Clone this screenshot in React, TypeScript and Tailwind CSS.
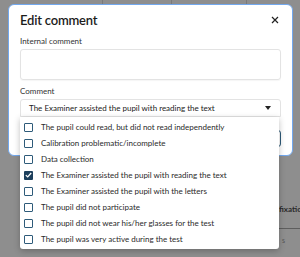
import { useState } from "react"

const options = [
  "The pupil could read, but did not read independently",
  "Calibration problematic/incomplete",
  "Data collection",
  "The Examiner assisted the pupil with reading the text",
  "The Examiner assisted the pupil with the letters",
  "The pupil did not participate",
  "The pupil did not wear his/her glasses for the test",
  "The pupil was very active during the test",
]

const stats = [
  { label: "Lo", value: "35" },
  { label: "Or", value: "96" },
  { label: "Sa", value: "4." },
  { label: "YI", value: "3." },
  { label: "Re", value: "8:" },
]

function Checkbox({ checked }: { checked: boolean }) {
  if (checked) {
    return (
      <span className="flex h-[9px] w-[9px] shrink-0 items-center justify-center rounded-[1px] bg-[#1d3f5c]">
        <svg width="7" height="6" viewBox="0 0 7 6" fill="none">
          <path d="M0.8 3.1 L2.7 4.9 L6.2 1" stroke="white" strokeWidth="1.3" />
        </svg>
      </span>
    )
  }
  return <span className="h-[9px] w-[9px] shrink-0 rounded-[1px] border-[1.5px] border-[#2e5b7a] bg-white" />
}

export default function App() {
  const [selected] = useState(3)

  return (
    <div
      className="relative h-[257px] w-[300px] overflow-hidden bg-[#8e8e8e]"
      style={{ fontFamily: "Lato, 'Open Sans', sans-serif" }}
    >
      {/* page behind the overlay */}
      <div className="flex h-full flex-col">
        <div className="flex h-[4px] shrink-0">
          <div className="w-[103px] border-r border-[#7a7a7a]" />
          <div className="w-[69px] border-r border-[#7a7a7a]" />
          <div className="w-[75px] border-r border-[#7a7a7a]" />
        </div>
        <div className="flex flex-1">
          <div className="flex flex-1 flex-col justify-end pb-[6px] pl-[279px]">
            <div className="text-[8px] font-bold leading-[10px] text-[#2a2a2a]">fixation</div>
            <div className="mt-[14px] border-t border-[#5e5e5e]" />
            <div className="mt-[6px] pl-[3px] text-[7px] text-[#555]">s</div>
            <div className="h-[6px]" />
          </div>
          <div className="flex w-[7px] shrink-0 flex-col gap-[13px] pt-[16px] text-[8px] leading-[11px]">
            {stats.map((s) => (
              <div key={s.label} className="flex flex-col">
                <span className="text-[#4a4a4a]">{s.label}</span>
                <span className="text-[#222]">{s.value}</span>
              </div>
            ))}
          </div>
        </div>
      </div>

      {/* modal */}
      <div className="absolute left-[8px] top-[4px] flex h-[152px] w-[285px] flex-col rounded-[6px] border border-[#72a8ee] bg-white px-[11px]">
        <div className="flex items-center justify-between pt-[5px]">
          <h2 className="text-[13px] font-semibold leading-[20px] tracking-[-0.2px] text-[#1c1c1c]">Edit comment</h2>
          <svg width="8" height="8" viewBox="0 0 8 8" className="mr-[2px]">
            <path d="M1 1 L7 7 M7 1 L1 7" stroke="#222" strokeWidth="1.2" />
          </svg>
        </div>
        <label className="mt-[6px] text-[8px] leading-[10px] text-[#333]">Internal comment</label>
        <div className="mt-[3px] h-[31px] rounded-[3px] border border-[#e3e3e3] shadow-[0_1px_1px_rgba(0,0,0,0.04)]" />
        <label className="mt-[6px] text-[8px] leading-[10px] text-[#333]">Comment</label>
        <div className="mt-[3px] flex h-[18px] items-center justify-between rounded-t-[3px] border border-[#e3e3e3] pl-[8px] pr-[9px]">
          <span className="text-[8px] text-[#222]">{options[selected]}</span>
          <svg width="6" height="4" viewBox="0 0 6 4">
            <path d="M0 0 L6 0 L3 4 Z" fill="#222" />
          </svg>
        </div>
        <div className="mt-auto mb-[8px] flex justify-end">
          <div className="h-[17px] w-[40px] rounded-[3px] border-[1.5px] border-[#2e5b7a]" />
        </div>
      </div>

      {/* open dropdown */}
      <div className="absolute left-[20px] top-[117px] w-[259px] rounded-b-[3px] bg-white py-[2px] shadow-[0_2px_6px_rgba(0,0,0,0.25)]">
        {options.map((o, i) => (
          <div key={o} className="flex h-[16px] items-center gap-[8px] pl-[4px]">
            <Checkbox checked={i === selected} />
            <span className="text-[8px] leading-[10px] text-[#2a2a2a]">{o}</span>
          </div>
        ))}
      </div>
    </div>
  )
}
